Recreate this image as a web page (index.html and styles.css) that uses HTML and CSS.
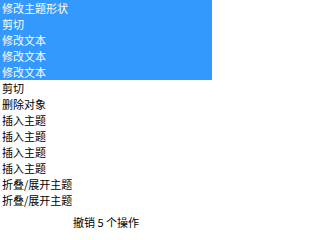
FILE: index.html
```html
<!DOCTYPE html>
<html>
<head>
<meta charset="utf-8">
<link rel="stylesheet" href="styles.css">
</head>
<body>
<div class="panel">
  <ul class="list">
    <li class="item sel">修改主题形状</li>
    <li class="item sel">剪切</li>
    <li class="item sel">修改文本</li>
    <li class="item sel">修改文本</li>
    <li class="item sel">修改文本</li>
    <li class="item">剪切</li>
    <li class="item">删除对象</li>
    <li class="item">插入主题</li>
    <li class="item">插入主题</li>
    <li class="item">插入主题</li>
    <li class="item">插入主题</li>
    <li class="item">折叠/展开主题</li>
    <li class="item">折叠/展开主题</li>
  </ul>
  <div class="footer">撤销 5 个操作</div>
</div>
</body>
</html>
```
FILE: styles.css
```css
html, body {
  margin: 0;
  padding: 0;
  background: #ffffff;
}
.panel {
  width: 212px;
  height: 231px;
  display: flex;
  flex-direction: column;
  font-family: "Noto Sans CJK SC", "Noto Sans", sans-serif;
  font-size: 11px;
  color: #000000;
}
.list {
  list-style: none;
  margin: 0;
  padding: 0;
}
.item {
  height: 16px;
  line-height: 16px;
  padding-left: 2px;
  white-space: nowrap;
}
.sel {
  background: #3399ff;
  color: #ffffff;
}
.footer {
  flex: 1;
  display: flex;
  align-items: center;
  justify-content: center;
  padding-top: 4px;
}
```
